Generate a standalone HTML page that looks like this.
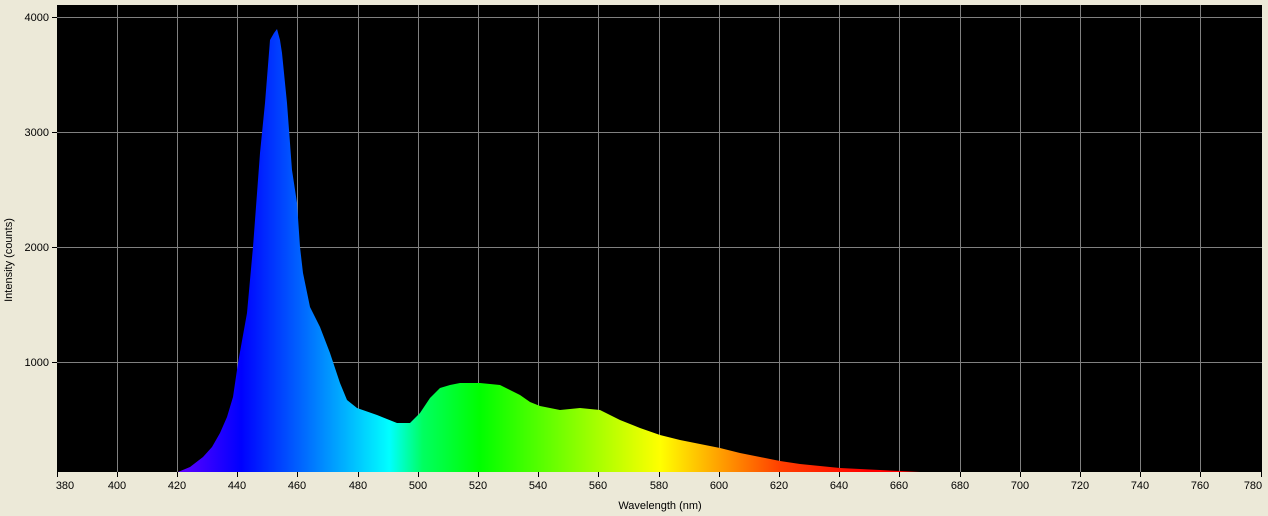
<!DOCTYPE html><html><head><style>body{margin:0;background:#ECE9D8;}svg{display:block}</style></head><body>
<svg width="1268" height="516" xmlns="http://www.w3.org/2000/svg" font-family="Liberation Sans, sans-serif" font-size="11">
<rect width="1268" height="516" fill="#ECE9D8"/>
<rect x="57" y="5" width="1205" height="467" fill="#000"/>
<defs><linearGradient id="g" gradientUnits="userSpaceOnUse" x1="178" y1="0" x2="920" y2="0">
<stop offset="0" stop-color="#6000ff"/>
<stop offset="0.085" stop-color="#0000ff"/>
<stop offset="0.162" stop-color="#0060ff"/>
<stop offset="0.285" stop-color="#00ffff"/>
<stop offset="0.33" stop-color="#00ff60"/>
<stop offset="0.407" stop-color="#00ff00"/>
<stop offset="0.528" stop-color="#80ff00"/>
<stop offset="0.65" stop-color="#ffff00"/>
<stop offset="0.73" stop-color="#ffa000"/>
<stop offset="0.811" stop-color="#ff4000"/>
<stop offset="0.93" stop-color="#ff0000"/>
<stop offset="1" stop-color="#ff0000"/>
</linearGradient></defs>
<g stroke="#808080" stroke-width="1">
<line x1="117.5" y1="5" x2="117.5" y2="472"/><line x1="177.5" y1="5" x2="177.5" y2="472"/><line x1="237.5" y1="5" x2="237.5" y2="472"/><line x1="297.5" y1="5" x2="297.5" y2="472"/><line x1="358.5" y1="5" x2="358.5" y2="472"/><line x1="418.5" y1="5" x2="418.5" y2="472"/><line x1="478.5" y1="5" x2="478.5" y2="472"/><line x1="538.5" y1="5" x2="538.5" y2="472"/><line x1="598.5" y1="5" x2="598.5" y2="472"/><line x1="659.5" y1="5" x2="659.5" y2="472"/><line x1="719.5" y1="5" x2="719.5" y2="472"/><line x1="779.5" y1="5" x2="779.5" y2="472"/><line x1="839.5" y1="5" x2="839.5" y2="472"/><line x1="899.5" y1="5" x2="899.5" y2="472"/><line x1="960.5" y1="5" x2="960.5" y2="472"/><line x1="1020.5" y1="5" x2="1020.5" y2="472"/><line x1="1080.5" y1="5" x2="1080.5" y2="472"/><line x1="1140.5" y1="5" x2="1140.5" y2="472"/><line x1="1200.5" y1="5" x2="1200.5" y2="472"/>
<line x1="57" y1="17.5" x2="1262" y2="17.5"/><line x1="57" y1="132.5" x2="1262" y2="132.5"/><line x1="57" y1="247.5" x2="1262" y2="247.5"/><line x1="57" y1="362.5" x2="1262" y2="362.5"/>
</g>
<path fill="url(#g)" d="M178 472 L190 467 L203 457 L212 447 L220 433 L227 417 L233 397 L238 363 L247 313 L253 247 L260 153 L265 103 L270 40 L274 33 L277 29 L280 40 L282 53 L287 103 L292 170 L297 203 L300 247 L303 273 L310 307 L320 327 L330 353 L340 383 L347 400 L357 408 L377 415 L397 423 L410 423 L420 413 L430 398 L440 388 L450 385 L460 383 L480 383 L500 385 L510 390 L520 395 L530 402 L540 406 L560 410 L580 408 L600 410 L610 415 L620 420 L640 428 L660 435 L680 440 L700 444 L720 448 L740 453 L760 457 L780 461 L800 464 L820 466 L840 468 L860 469 L880 470 L900 471 L920 472 Z"/>
<g stroke="#000" stroke-width="1">
<line x1="57.5" y1="472" x2="57.5" y2="477"/><line x1="117.5" y1="472" x2="117.5" y2="477"/><line x1="177.5" y1="472" x2="177.5" y2="477"/><line x1="237.5" y1="472" x2="237.5" y2="477"/><line x1="297.5" y1="472" x2="297.5" y2="477"/><line x1="358.5" y1="472" x2="358.5" y2="477"/><line x1="418.5" y1="472" x2="418.5" y2="477"/><line x1="478.5" y1="472" x2="478.5" y2="477"/><line x1="538.5" y1="472" x2="538.5" y2="477"/><line x1="598.5" y1="472" x2="598.5" y2="477"/><line x1="659.5" y1="472" x2="659.5" y2="477"/><line x1="719.5" y1="472" x2="719.5" y2="477"/><line x1="779.5" y1="472" x2="779.5" y2="477"/><line x1="839.5" y1="472" x2="839.5" y2="477"/><line x1="899.5" y1="472" x2="899.5" y2="477"/><line x1="960.5" y1="472" x2="960.5" y2="477"/><line x1="1020.5" y1="472" x2="1020.5" y2="477"/><line x1="1080.5" y1="472" x2="1080.5" y2="477"/><line x1="1140.5" y1="472" x2="1140.5" y2="477"/><line x1="1200.5" y1="472" x2="1200.5" y2="477"/><line x1="1261.5" y1="472" x2="1261.5" y2="477"/>
<line x1="52" y1="17.5" x2="57" y2="17.5"/><line x1="52" y1="132.5" x2="57" y2="132.5"/><line x1="52" y1="247.5" x2="57" y2="247.5"/><line x1="52" y1="362.5" x2="57" y2="362.5"/>
</g>
<g fill="#000" text-anchor="middle">
<text x="65" y="489">380</text><text x="117" y="489">400</text><text x="177" y="489">420</text><text x="237" y="489">440</text><text x="297" y="489">460</text><text x="358" y="489">480</text><text x="418" y="489">500</text><text x="478" y="489">520</text><text x="538" y="489">540</text><text x="598" y="489">560</text><text x="659" y="489">580</text><text x="719" y="489">600</text><text x="779" y="489">620</text><text x="839" y="489">640</text><text x="899" y="489">660</text><text x="960" y="489">680</text><text x="1020" y="489">700</text><text x="1080" y="489">720</text><text x="1140" y="489">740</text><text x="1200" y="489">760</text><text x="1253" y="489">780</text>
<text x="660" y="509">Wavelength (nm)</text>
<text transform="translate(12 260) rotate(-90)">Intensity (counts)</text>
</g>
<g fill="#000" text-anchor="end">
<text x="49" y="21">4000</text><text x="49" y="136">3000</text><text x="49" y="251">2000</text><text x="49" y="366">1000</text>
</g>
</svg>
</body></html>
